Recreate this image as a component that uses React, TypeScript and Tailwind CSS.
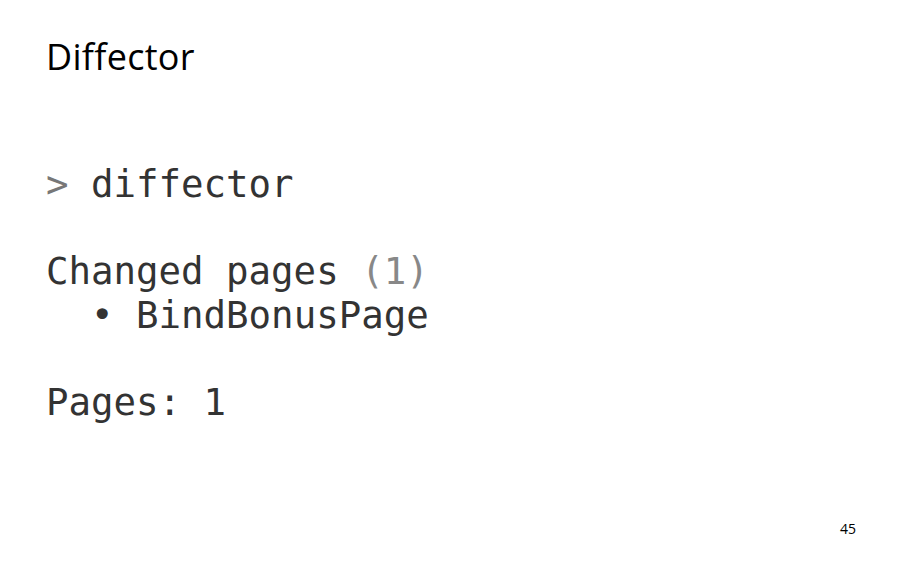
export default function App() {
  return (
    <div className="relative w-[900px] h-[563px] bg-white overflow-hidden">
      <div className="flex flex-col pl-[46px] pt-[37px]">
        <h1 className="text-[36px] leading-[40px] text-black font-['Open_Sans',sans-serif] tracking-[0.3px]">
          Diffector
        </h1>
        <pre className="mt-[86px] text-[37.4px] leading-[43.6px] text-[#333333] font-['DejaVu_Sans_Mono',monospace]">
          <span className="text-[#777777]">&gt;</span> diffector{'\n'}
          {'\n'}
          Changed pages <span className="text-[#888888]">(1)</span>{'\n'}
          {'  '}• BindBonusPage{'\n'}
          {'\n'}
          Pages: 1
        </pre>
      </div>
      <div className="absolute right-[44px] bottom-[24px] text-[14px] text-black font-['Open_Sans',sans-serif]">
        45
      </div>
    </div>
  );
}
